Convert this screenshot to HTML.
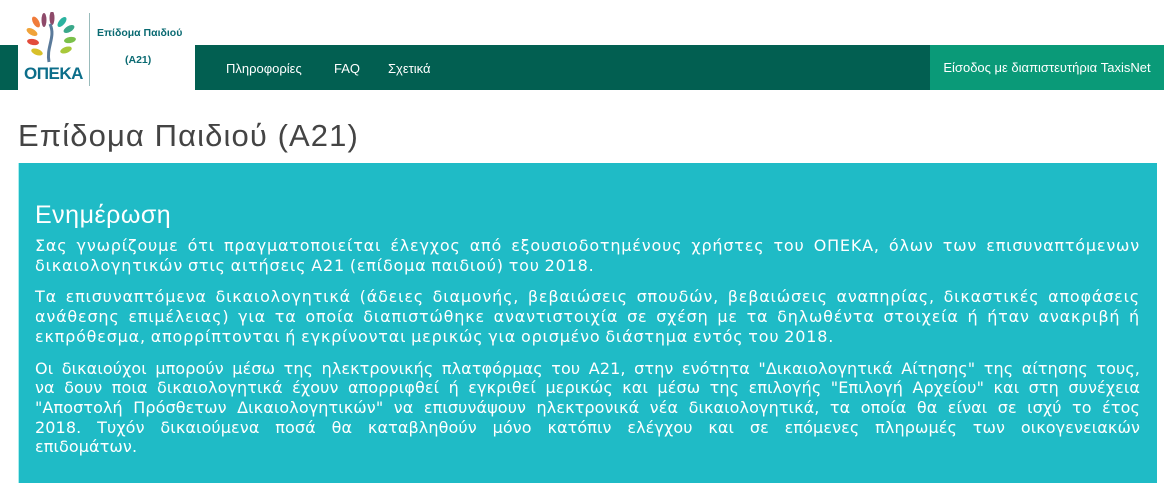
<!DOCTYPE html>
<html><head><meta charset="utf-8"><style>
body{margin:0;width:1164px;height:490px;background:#fff;font-family:"Liberation Sans","DejaVu Sans",sans-serif;position:relative;overflow:hidden}
.nav{position:absolute;left:0;top:45px;width:1164px;height:45px;background:#025f51}
.logo{position:absolute;left:18px;top:0;width:177px;height:90px;background:#fff}
.vline{position:absolute;left:71px;top:13px;width:1px;height:73px;background:#9bb}
.t1{position:absolute;left:79px;top:27px;font-size:10.5px;font-weight:bold;color:#0a6a72;white-space:nowrap}
.t2{position:absolute;left:107px;top:54px;font-size:10.5px;font-weight:bold;color:#0a6a72}
.opeka{position:absolute;left:6px;top:64px;font-size:17px;font-weight:bold;color:#0c6e8a;letter-spacing:-0.5px}
.links{position:absolute;top:61px;font-size:13px;color:#fff}
.btn{position:absolute;left:930px;top:45px;width:234px;height:45px;background:#0a9a78;color:#fff;font-size:13px;line-height:45px;text-align:center}
h1{position:absolute;left:18px;top:118px;margin:0;font-weight:normal;font-size:31px;letter-spacing:1.1px;color:#444}
.box{position:absolute;left:18px;top:163px;width:1139px;height:320px;background:#1fbbc6;color:#fff;box-sizing:border-box;padding:38px 17px 0 16px;border-left:1px solid #aee}
.box h2{margin:0 0 6px;font-weight:normal;font-size:25px;letter-spacing:0.5px}
.box p{margin:0 0 12px;font-family:"DejaVu Sans",sans-serif;font-size:16px;line-height:19.7px;text-align:justify;letter-spacing:0.8px;word-spacing:-1px}
.box p.p3{letter-spacing:0.1px;word-spacing:-2px}
.p3 span{display:block;white-space:nowrap;text-align:justify;text-align-last:justify}
.p3 span.l{text-align-last:left}
</style></head><body>
<div class="nav"></div>
<div class="logo">
<svg style="position:absolute;left:6px;top:12px" width="60" height="52" viewBox="0 0 60 52">
<g>
<ellipse cx="12" cy="10" rx="3" ry="6" fill="#f07b3a" transform="rotate(-30 12 10)"/>
<ellipse cx="20" cy="8" rx="2.5" ry="7" fill="#8e4a6a"/>
<ellipse cx="28" cy="6" rx="2.5" ry="7" fill="#8e4a6a"/>
<ellipse cx="38" cy="10" rx="3" ry="6" fill="#2bb3a0" transform="rotate(40 38 10)"/>
<ellipse cx="45" cy="17" rx="3" ry="6" fill="#3aa88a" transform="rotate(60 45 17)"/>
<ellipse cx="8" cy="20" rx="3" ry="6" fill="#f0a33a" transform="rotate(-60 8 20)"/>
<ellipse cx="9" cy="30" rx="3" ry="6" fill="#e24b3a" transform="rotate(-80 9 30)"/>
<ellipse cx="13" cy="40" rx="3" ry="6" fill="#d8c02a" transform="rotate(-70 13 40)"/>
<ellipse cx="46" cy="28" rx="3" ry="6" fill="#7ac04a" transform="rotate(80 46 28)"/>
<ellipse cx="42" cy="38" rx="3" ry="6" fill="#a8c83a" transform="rotate(70 42 38)"/>
<path d="M25 50 C22 35 32 25 26 12" stroke="#5a7a9a" stroke-width="3" fill="none"/>
</g></svg>
<div class="opeka">ΟΠΕΚΑ</div>
<div class="vline"></div>
<div class="t1">Επίδομα Παιδιού</div>
<div class="t2">(Α21)</div>
</div>
<div class="links" style="left:226px">Πληροφορίες</div>
<div class="links" style="left:334px">FAQ</div>
<div class="links" style="left:388px">Σχετικά</div>
<div class="btn">Είσοδος με διαπιστευτήρια TaxisNet</div>
<h1>Επίδομα Παιδιού (Α21)</h1>
<div class="box">
<h2>Ενημέρωση</h2>
<p>Σας γνωρίζουμε ότι πραγματοποιείται έλεγχος από εξουσιοδοτημένους χρήστες του ΟΠΕΚΑ, όλων των επισυναπτόμενων δικαιολογητικών στις αιτήσεις Α21 (επίδομα παιδιού) του 2018.</p>
<p>Τα επισυναπτόμενα δικαιολογητικά (άδειες διαμονής, βεβαιώσεις σπουδών, βεβαιώσεις αναπηρίας, δικαστικές αποφάσεις ανάθεσης επιμέλειας) για τα οποία διαπιστώθηκε αναντιστοιχία σε σχέση με τα δηλωθέντα στοιχεία ή ήταν ανακριβή ή εκπρόθεσμα, απορρίπτονται ή εγκρίνονται μερικώς για ορισμένο διάστημα εντός του 2018.</p>
<p class="p3"><span>Οι δικαιούχοι μπορούν μέσω της ηλεκτρονικής πλατφόρμας του Α21, στην ενότητα "Δικαιολογητικά Αίτησης" της αίτησης τους,</span><span>να δουν ποια δικαιολογητικά έχουν απορριφθεί ή εγκριθεί μερικώς και μέσω της επιλογής "Επιλογή Αρχείου" και στη συνέχεια</span><span>"Αποστολή Πρόσθετων Δικαιολογητικών" να επισυνάψουν ηλεκτρονικά νέα δικαιολογητικά, τα οποία θα είναι σε ισχύ το έτος</span><span>2018. Τυχόν δικαιούμενα ποσά θα καταβληθούν μόνο κατόπιν ελέγχου και σε επόμενες πληρωμές των οικογενειακών</span><span class="l">επιδομάτων.</span></p>
</div>
</body></html>
